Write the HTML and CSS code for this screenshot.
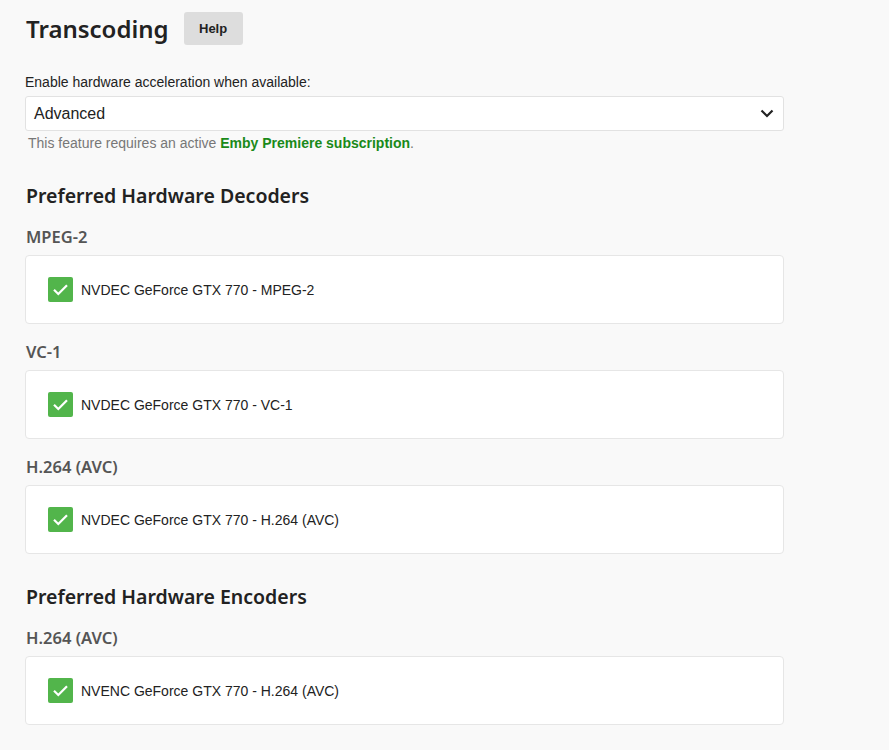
FILE: index.html
```html
<!DOCTYPE html>
<html>
<head>
<meta charset="utf-8">
<link rel="stylesheet" href="styles.css">
</head>
<body>
<div class="page">
  <div class="title-row">
    <h1 class="title">Transcoding</h1>
    <button class="help-btn">Help</button>
  </div>

  <div class="field">
    <label class="field-label">Enable hardware acceleration when available:</label>
    <div class="select">
      <span>Advanced</span>
      <svg class="chevron" width="14" height="9" viewBox="0 0 14 9"><path d="M1.5 1.5 L7 7 L12.5 1.5" fill="none" stroke="#222" stroke-width="2.2"/></svg>
    </div>
    <div class="field-note">This feature requires an active <a class="link">Emby Premiere subscription</a>.</div>
  </div>

  <h2 class="section-title">Preferred Hardware Decoders</h2>

  <div class="codec">
    <h3 class="codec-title">MPEG-2</h3>
    <div class="card">
      <span class="check"><svg width="25" height="25" viewBox="0 0 25 25"><path d="M6 12.8 L10.3 17 L19 8.2" fill="none" stroke="#fff" stroke-width="2.2"/></svg></span>
      <span class="card-text">NVDEC GeForce GTX 770 - MPEG-2</span>
    </div>
  </div>

  <div class="codec">
    <h3 class="codec-title">VC-1</h3>
    <div class="card">
      <span class="check"><svg width="25" height="25" viewBox="0 0 25 25"><path d="M6 12.8 L10.3 17 L19 8.2" fill="none" stroke="#fff" stroke-width="2.2"/></svg></span>
      <span class="card-text">NVDEC GeForce GTX 770 - VC-1</span>
    </div>
  </div>

  <div class="codec">
    <h3 class="codec-title">H.264 (AVC)</h3>
    <div class="card">
      <span class="check"><svg width="25" height="25" viewBox="0 0 25 25"><path d="M6 12.8 L10.3 17 L19 8.2" fill="none" stroke="#fff" stroke-width="2.2"/></svg></span>
      <span class="card-text">NVDEC GeForce GTX 770 - H.264 (AVC)</span>
    </div>
  </div>

  <h2 class="section-title encoders">Preferred Hardware Encoders</h2>

  <div class="codec">
    <h3 class="codec-title">H.264 (AVC)</h3>
    <div class="card">
      <span class="check"><svg width="25" height="25" viewBox="0 0 25 25"><path d="M6 12.8 L10.3 17 L19 8.2" fill="none" stroke="#fff" stroke-width="2.2"/></svg></span>
      <span class="card-text">NVENC GeForce GTX 770 - H.264 (AVC)</span>
    </div>
  </div>
</div>
</body>
</html>
```

FILE: styles.css
```css
html, body {
  margin: 0;
  padding: 0;
  background: #f9f9f9;
}
body {
  font-family: "Liberation Sans", Arial, sans-serif;
  color: #222;
}
.page {
  width: 759px;
  padding: 12px 0 0 25px;
}
.title-row {
  display: flex;
  align-items: center;
  gap: 15px;
  height: 33px;
}
.title {
  margin: 0 0 0 1px;
  font-family: "Noto Sans", Lato, sans-serif;
  font-weight: 600;
  font-size: 24px;
  color: #222;
  line-height: 33px;
}
.help-btn {
  width: 59px;
  height: 33px;
  border: none;
  border-radius: 3px;
  background: #dddddd;
  font-family: "Liberation Sans", Arial, sans-serif;
  font-weight: 700;
  font-size: 13px;
  color: #222;
  padding: 0;
  margin-top: 0;
}
.field {
  margin-top: 29px;
}
.field-label {
  display: block;
  font-size: 14px;
  color: #222;
  line-height: 16px;
  margin-bottom: 6px;
}
.select {
  box-sizing: border-box;
  height: 35px;
  background: #fff;
  border: 1px solid #e2e2e2;
  border-radius: 3px;
  display: flex;
  align-items: center;
  justify-content: space-between;
  padding: 0 9px 0 8px;
  font-size: 16px;
  color: #222;
}
.chevron {
  display: block;
}
.field-note {
  margin-top: 4px;
  padding-left: 3px;
  font-size: 14px;
  color: #777;
  line-height: 16px;
}
.link {
  color: #1a8a1a;
  font-weight: 700;
  text-decoration: none;
}
.section-title {
  margin: 33px 0 0 1px;
  font-family: "Noto Sans", Lato, sans-serif;
  font-weight: 600;
  font-size: 19.5px;
  color: #222;
  line-height: 24px;
}
.section-title.encoders {
  margin-top: 31px;
}
.codec-title {
  margin: 19px 0 8px 1px;
  font-family: "Noto Sans", Lato, sans-serif;
  font-weight: 600;
  font-size: 16.5px;
  color: #555;
  line-height: 20px;
}
.codec + .codec .codec-title {
  margin-top: 18px;
}
.card {
  box-sizing: border-box;
  height: 69px;
  background: #fff;
  border: 1px solid #e6e6e6;
  border-radius: 4px;
  display: flex;
  align-items: center;
  padding-left: 22px;
}
.check {
  width: 25px;
  height: 25px;
  background: #52b54b;
  border-radius: 2px;
  display: block;
  margin-right: 8px;
}
.check svg {
  display: block;
}
.card-text {
  font-size: 14px;
  color: #222;
}
```
